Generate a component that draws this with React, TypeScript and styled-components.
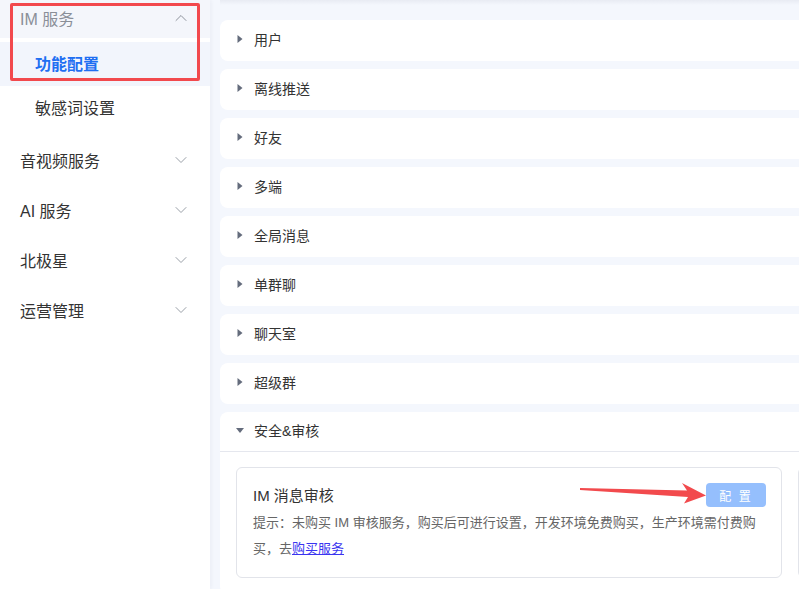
import React from "react";
import styled, { createGlobalStyle } from "styled-components";
import { ChevronDown, ChevronUp } from "lucide-react";

const GlobalStyle = createGlobalStyle`
  html, body {
    margin: 0;
    padding: 0;
    background: #f4f7fd;
  }
  body {
    font-family: "Liberation Sans", "Noto Sans CJK SC", sans-serif;
    color: #333;
  }
`;

const menu = [
  { title: "音视频服务" },
  { title: "AI 服务" },
  { title: "北极星" },
  { title: "运营管理" },
];

const panels = ["用户", "离线推送", "好友", "多端", "全局消息", "单群聊", "聊天室", "超级群"];

const Caret = ({ open }: { open?: boolean }) => (
  <CaretSvg width="8" height="8" viewBox="0 0 8 8">
    {open ? <polygon points="0,2 8,2 4,7" fill="#646c7c" /> : <polygon points="1.5,0 6.5,4 1.5,8" fill="#646c7c" />}
  </CaretSvg>
);

const App = () => {
  return (
    <>
      <GlobalStyle />
      <Page>
        <Sidebar>
          <GroupHeader $muted $filled>
            <span>IM 服务</span>
            <ChevronUp size={20} strokeWidth={1.2} color="#8e939c" />
          </GroupHeader>
          <SubMenu>
            <SubItem $active>功能配置</SubItem>
            <SubItem>敏感词设置</SubItem>
          </SubMenu>
          {menu.map((m) => (
            <GroupHeader key={m.title}>
              <span>{m.title}</span>
              <ChevronDown size={20} strokeWidth={1.2} color="#9aa0a8" />
            </GroupHeader>
          ))}
        </Sidebar>

        <Main>
          <TopShadow />
          <PanelList>
            {panels.map((p) => (
              <Panel key={p}>
                <PanelHeader>
                  <Caret />
                  <span>{p}</span>
                </PanelHeader>
              </Panel>
            ))}
            <Panel>
              <PanelHeader $open>
                <Caret open />
                <span>安全&amp;审核</span>
              </PanelHeader>
              <PanelBody>
                <Card>
                  <CardTitleRow>
                    <CardTitle>IM 消息审核</CardTitle>
                    <ConfigButton disabled>配 置</ConfigButton>
                  </CardTitleRow>
                  <Hint>
                    <span>提示：未购买 IM 审核服务，购买后可进行设置，开发环境免费购买，生产环境需付费购买，去</span>
                    <a href="#">购买服务</a>
                  </Hint>
                </Card>
                <Card />
              </PanelBody>
            </Panel>
          </PanelList>
        </Main>

        <Highlight />
        <Arrow width="134" height="30" viewBox="576 478 134 30">
          <polygon
            points="580,488 687,490.5 682,483 706,495.5 684,503.5 688,497 580,490"
            fill="#f24a4d"
          />
        </Arrow>
      </Page>
    </>
  );
};

export default App;

const Page = styled.div`
  position: relative;
  display: flex;
  width: 799px;
  height: 589px;
  overflow: hidden;
`;

const Sidebar = styled.aside`
  width: 210px;
  flex-shrink: 0;
  background: #fff;
  box-shadow: 1px 0 4px rgba(30, 40, 80, 0.05);
  z-index: 1;
`;

const GroupHeader = styled.div<{ $muted?: boolean; $filled?: boolean }>`
  height: ${({ $filled }) => ($filled ? "38px" : "50px")};
  box-sizing: border-box;
  display: flex;
  align-items: center;
  justify-content: space-between;
  padding: 0 19px 2px 20px;
  font-size: 16px;
  color: ${({ $muted }) => ($muted ? "#8a8f98" : "#333")};
  background: ${({ $filled }) => ($filled ? "#f4f6fb" : "transparent")};
`;

const SubMenu = styled.div`
  padding: 4px 0 6px;
`;

const SubItem = styled.div<{ $active?: boolean }>`
  height: 44px;
  box-sizing: border-box;
  display: flex;
  align-items: center;
  padding: 0 0 2px 35px;
  font-size: 16px;
  font-weight: ${({ $active }) => ($active ? 600 : 400)};
  color: ${({ $active }) => ($active ? "#1f6ff2" : "#333")};
  background: ${({ $active }) => ($active ? "#f2f5fc" : "transparent")};
`;

const Main = styled.main`
  flex: 1;
  min-width: 0;
  background: #f4f7fd;
  padding-left: 10px;
`;

const TopShadow = styled.div`
  height: 5px;
  background: linear-gradient(#e8ebf3, #f4f7fd);
`;

const PanelList = styled.div`
  display: flex;
  flex-direction: column;
  gap: 8px;
  margin-top: 15px;
  width: 1100px;
`;

const Panel = styled.section`
  background: #fff;
  border-radius: 8px;
`;

const PanelHeader = styled.div<{ $open?: boolean }>`
  height: ${({ $open }) => ($open ? "40px" : "41px")};
  box-sizing: border-box;
  display: flex;
  align-items: center;
  gap: 10px;
  padding: 0 0 3px 16px;
  font-size: 14px;
  color: #333;
  border-bottom: ${({ $open }) => ($open ? "1px solid #e5e7ee" : "none")};
`;

const CaretSvg = styled.svg`
  flex-shrink: 0;
`;

const PanelBody = styled.div`
  display: flex;
  gap: 16px;
  padding: 15px 16px 16px;
`;

const Card = styled.div`
  width: 546px;
  height: 111px;
  box-sizing: border-box;
  flex-shrink: 0;
  border: 1px solid #e2e4ea;
  border-radius: 6px;
  padding: 15px 15px 14px 16px;
`;

const CardTitleRow = styled.div`
  display: flex;
  align-items: center;
  justify-content: space-between;
  height: 24px;
`;

const CardTitle = styled.div`
  font-size: 15px;
  color: #333;
  padding-bottom: 2px;
`;

const ConfigButton = styled.button`
  width: 60px;
  height: 24px;
  border: none;
  border-radius: 4px;
  background: #95bffd;
  color: #fff;
  font-size: 12px;
  font-family: inherit;
  letter-spacing: 2px;
  padding: 0;
  cursor: not-allowed;
`;

const Hint = styled.p`
  margin: 3px 0 0;
  font-size: 13px;
  line-height: 26px;
  color: #666;

  a {
    color: #3a35f0;
    text-decoration: underline;
  }
`;

const Highlight = styled.div`
  position: absolute;
  left: 10px;
  top: 3px;
  width: 190px;
  height: 78px;
  box-sizing: border-box;
  border: 3px solid #f2494d;
  border-radius: 2px;
  z-index: 2;
  pointer-events: none;
`;

const Arrow = styled.svg`
  position: absolute;
  left: 576px;
  top: 478px;
  z-index: 2;
  pointer-events: none;
`;
